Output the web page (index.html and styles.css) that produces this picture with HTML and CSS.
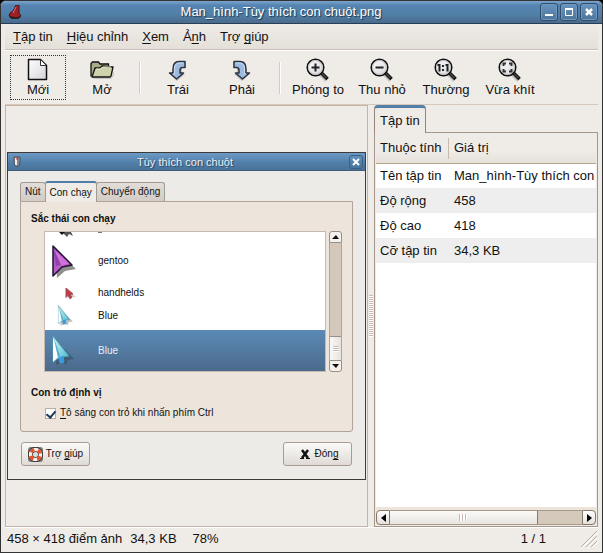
FILE: index.html
```html
<!DOCTYPE html>
<html lang="vi">
<head>
<meta charset="utf-8">
<title>Man_hình-Tùy thích con chuột.png</title>
<link rel="stylesheet" href="styles.css">
</head>
<body>
<svg class="defs" width="0" height="0" aria-hidden="true">
  <defs>
    <linearGradient id="paper" x1="0" y1="0" x2="1" y2="1"><stop offset="0" stop-color="#fff"/><stop offset="1" stop-color="#d4d2d6"/></linearGradient>
    <linearGradient id="ice" x1="0" y1="0" x2="1" y2="1"><stop offset="0" stop-color="#d9f6f8"/><stop offset="1" stop-color="#3ab4cf"/></linearGradient>
    <linearGradient id="violet" x1="0" y1="0" x2="1" y2="1"><stop offset="0" stop-color="#8d4bb5"/><stop offset=".6" stop-color="#c561cf"/><stop offset="1" stop-color="#62307c"/></linearGradient>
    <symbol id="lens" viewBox="0 0 24 24">
      <path d="M15 16l6 6" stroke="#777" stroke-opacity=".4" stroke-width="5"/>
      <path d="M15 14.500l6.500 6.500" stroke="#111" stroke-width="3.500"/>
      <path d="M15.500 15l5 5" stroke="#777" stroke-width="1"/>
      <circle cx="9.500" cy="9.500" r="8.300" fill="url(#paper)" stroke="#111" stroke-width="1.500"/>
      <circle cx="9.500" cy="9.500" r="7" fill="none" stroke="#bbb"/>
    </symbol>
    <symbol id="blue-cursor" viewBox="0 0 28 32">
      <path d="M7 6l17 18-6 1-2 5-3-3-7 3z" fill="#222" opacity=".28"/>
      <path d="M3 1l16 20-6 1 1 5-4 1-1-5-6 4z" fill="url(#ice)" stroke="#4b9cac" stroke-width="1"/>
      <path d="M3 2v25l5-5z" fill="#fff"/>
      <path d="M4 3l4 19 2-1z" fill="#4faac2"/>
      <path d="M9 22l4-1 1 6-4 1z" fill="#359be5"/>
    </symbol>
  </defs>
</svg>
<div class="window">
  <header class="titlebar">
    <svg class="app-icon" width="14" height="14" viewBox="0 0 14 14" aria-hidden="true"><path d="M1 12q5-2 12 0l-3 2H4z" fill="#222"/><path d="M8 0h3v8l2 3-5 2-7-2 1-3 3-2z" fill="#9e2025" stroke="#3f1720"/><path d="M8 2L5 8" stroke="#e57472"/></svg>
    <h1>Man_hình-Tùy thích con chuột.png</h1>
    <div class="win-buttons">
      <button type="button" aria-label="Thu nhỏ cửa sổ"><svg width="10" height="10"><path d="M1 8h8" stroke="#fff" stroke-width="2"/></svg></button>
      <button type="button" aria-label="Phóng to cửa sổ"><svg width="10" height="10"><path d="M1.500 1v7.500h7V1" stroke="#fff" fill="none"/><path d="M1 2h8" stroke="#fff" stroke-width="2"/></svg></button>
      <button type="button" aria-label="Đóng cửa sổ"><svg width="10" height="10"><path d="M2 2l6 6M8 2L2 8" stroke="#fff" stroke-width="2.500"/></svg></button>
    </div>
  </header>
  <div class="frame">
    <nav class="menubar">
      <button type="button"><u>T</u>ập tin</button>
      <button type="button"><u>H</u>iệu chỉnh</button>
      <button type="button"><u>X</u>em</button>
      <button type="button">Ả<u>n</u>h</button>
      <button type="button">Trợ <u>g</u>iúp</button>
    </nav>
    <div class="toolbar">
      <button type="button" class="focused">
        <svg width="24" height="24" viewBox="0 0 24 24"><path d="M2.500 1.500h12l6 6v14h-18z" fill="url(#paper)" stroke="#111" stroke-width="1.500" stroke-linejoin="round"/><path d="M14.500 2v5.500H20" fill="#fff" stroke="#333"/></svg>
        <span>Mới</span></button>
      <button type="button">
        <svg width="24" height="24" viewBox="0 0 24 24"><path d="M3 20h18l3-7v4l-3 4H4z" fill="#999" opacity=".5"/><path d="M1 18.500V5.500L2.500 4h6L10 6h8.500v4" fill="#a8ad88" stroke="#111" stroke-width="1.300"/><path d="M2 19L5 10h5l2-2 11 1-2 9-1 1z" fill="#cdd2ac" stroke="#111" stroke-width="1.300" stroke-linejoin="round"/><path d="M6 11h4.500l2-2H21" stroke="#eef1d5" fill="none"/></svg>
        <span>Mở</span></button>
      <span class="sep"></span>
      <button type="button">
        <svg width="24" height="24" viewBox="0 0 24 24"><g id="turn"><path d="M20 4v6h-4v6h3l-8 7-7-7" fill="#777" opacity=".4"/><path d="M19 3.500v6h-2.500q-2.500 0-2.500 3v2.500h3.500L10.500 21l-7-6H7v-4q0-7.500 6-7.500z" fill="#9dbbe0" stroke="#2c3440" stroke-width="1.500" stroke-linejoin="round"/><path d="M17.500 5h-4Q8.500 5 8.500 11v5H7" fill="none" stroke="#c9dbf0"/></g></svg>
        <span>Trái</span></button>
      <button type="button">
        <svg width="24" height="24" viewBox="0 0 24 24"><use href="#turn" transform="translate(23 0) scale(-1 1)"/></svg>
        <span>Phải</span></button>
      <span class="sep"></span>
      <button type="button">
        <svg width="24" height="24"><use href="#lens"/><path d="M5.500 9.500h8M9.500 5.500v8" stroke="#222" stroke-width="2"/></svg>
        <span>Phóng to</span></button>
      <button type="button">
        <svg width="24" height="24"><use href="#lens"/><path d="M5.500 9.500h8" stroke="#222" stroke-width="2"/></svg>
        <span>Thu nhỏ</span></button>
      <button type="button">
        <svg width="24" height="24"><use href="#lens"/><path d="M3.500 7h2v6.500M11.500 7h2v6.500" fill="none" stroke="#222" stroke-width="2"/><path d="M9 7v2M9 11v2" stroke="#222" stroke-width="2"/></svg>
        <span>Thường</span></button>
      <button type="button">
        <svg width="24" height="24"><use href="#lens"/><path d="M5.500 8V5.500H8M11 5.500h2.500V8M13.500 11v2.500H11M8 13.500H5.500V11" fill="none" stroke="#333" stroke-width="2"/></svg>
        <span>Vừa khít</span></button>
    </div>
    <main class="split">
      <section class="viewer">
        <div class="dialog">
          <div class="dialog-title">
            <svg width="8" height="12" viewBox="0 0 8 12" aria-hidden="true"><path d="M1 1h6v5q0 4-3 5-3-1-3-5z" fill="#8a8588" stroke="#4b5662"/><path d="M3 2v7" stroke="#eee" stroke-width="2"/><path d="M4 1v3" stroke="#a34"/></svg>
            <h2>Tùy thích con chuột</h2>
            <button type="button" aria-label="Đóng hộp thoại"><svg width="8" height="8"><path d="M1 1l6 6M7 1L1 7" stroke="#fff" stroke-width="2"/></svg></button>
          </div>
          <div class="dialog-body">
            <div class="tabs">
              <button type="button">Nút</button>
              <button type="button" class="active">Con chạy</button>
              <button type="button">Chuyển động</button>
            </div>
            <div class="tab-page">
              <h3>Sắc thái con chạy</h3>
              <div class="theme-box">
                <ul class="themes">
                  <li class="cut"><svg width="28" height="7"><path d="M9 0h12l2 4-4-2-2 3-4-4z" fill="#555"/><path d="M9 0h6l-3 3z" fill="#111"/></svg><i></i></li>
                  <li class="big"><svg width="28" height="34" viewBox="0 0 28 34"><path d="M5 5l21 20-11 2-8 7z" fill="#222" opacity=".5"/><path d="M3 2l19 19-10 2-9 9z" fill="url(#violet)" stroke="#241331" stroke-width="1.500" stroke-linejoin="round"/><path d="M4 5l7 16 8-1z" fill="#cf72dc"/><path d="M4 6l2 16 5-1z" fill="#9142aa"/></svg>gentoo</li>
                  <li class="small"><svg width="28" height="14" viewBox="0 0 28 14"><path d="M18 4l8 7-4 0-3 3z" fill="#999" opacity=".5"/><path d="M16 2l7 6-3 .500 2 3-2 1-2-3-2 2z" fill="#cf3644" stroke="#97515a"/></svg>handhelds</li>
                  <li class="mid"><svg width="28" height="22"><use href="#blue-cursor" x="2"/></svg>Blue</li>
                  <li class="selected"><svg width="28" height="32"><use href="#blue-cursor"/></svg>Blue</li>
                </ul>
                <div class="vscroll">
                  <button type="button" aria-label="Cuộn lên"><svg width="7" height="4"><path d="M0 4h7L4 0z" fill="#111"/></svg></button>
                  <div class="trough"><div class="grip"></div></div>
                  <button type="button" aria-label="Cuộn xuống"><svg width="7" height="4"><path d="M0 0h7L4 4z" fill="#111"/></svg></button>
                </div>
              </div>
              <h3>Con trỏ định vị</h3>
              <label class="check"><input type="checkbox" checked><span><u>T</u>ô sáng con trỏ khi nhấn phím Ctrl</span></label>
            </div>
            <div class="actions">
              <button type="button" class="help"><svg width="15" height="15" viewBox="0 0 15 15"><rect width="15" height="15" rx="3" fill="#777"/><circle cx="7.500" cy="7.500" r="5" fill="none" stroke="#222" stroke-width="5"/><circle cx="7.500" cy="7.500" r="5" fill="none" stroke="#f4f1ed" stroke-width="3.500"/><circle cx="7.500" cy="7.500" r="5" fill="none" stroke="#e95028" stroke-width="3.500" stroke-dasharray="4 3.850" stroke-dashoffset="-2"/><circle cx="7.500" cy="7.500" r="2.500" fill="#ddd"/></svg><span>Trợ <u>g</u>iúp</span></button>
              <button type="button" class="close"><svg width="10" height="10"><path d="M2 1l6 8M8 1L2 9" stroke="#111" stroke-width="2.500"/><path d="M0 9.500h4M6 9.500h4" stroke="#111"/></svg><span>Đón<u>g</u></span></button>
            </div>
          </div>
        </div>
      </section>
      <div class="handle"></div>
      <aside class="props">
        <button type="button" class="props-tab">Tập tin</button>
        <div class="props-page">
          <div class="table-area">
            <table>
              <thead><tr><th>Thuộc tính</th><th>Giá trị</th></tr></thead>
              <tbody>
                <tr><td>Tên tập tin</td><td>Man_hình-Tùy thích con chuột.png</td></tr>
                <tr><td>Độ rộng</td><td>458</td></tr>
                <tr><td>Độ cao</td><td>418</td></tr>
                <tr><td>Cỡ tập tin</td><td>34,3 KB</td></tr>
              </tbody>
            </table>
          </div>
          <div class="hscroll">
            <button type="button" aria-label="Cuộn trái"><svg width="5" height="8"><path d="M5 0v8L0 4z"/></svg></button>
            <div class="trough"><div class="grip"></div></div>
            <button type="button" aria-label="Cuộn phải"><svg width="5" height="8"><path d="M0 0v8l5-4z"/></svg></button>
          </div>
        </div>
      </aside>
    </main>
    <footer class="status">
      <span>458 × 418 điểm ảnh</span><span>34,3 KB</span><span class="zoom">78%</span>
      <span class="page">1 / 1</span>
      <svg width="18" height="18" aria-hidden="true"><path d="M1 17L17 1M6 17L17 6M11 17l6-6" stroke="#b9aca6"/><path d="M2 18L18 2M7 18L18 7M12 18l6-6" stroke="#fff"/></svg>
    </footer>
  </div>
</div>
</body>
</html>
```
FILE: styles.css
```css
* { box-sizing: border-box; }
body {
  margin: 0;
  background: #000;
  color: #111;
  font: 13px/16px "Liberation Sans", Arial, sans-serif;
}
h1, h2, h3, ul { margin: 0; padding: 0; font-size: inherit; list-style: none; }
button { margin: 0; padding: 0; border: 0; background: none; color: inherit; font: inherit; }
svg { display: block; flex: none; }
u { text-underline-offset: 2px; text-decoration-skip-ink: none; }
.defs { position: absolute; }

.window {
  display: flex;
  flex-direction: column;
  height: 100vh;
  border: 1px solid #333;
  border-radius: 6px 6px 0 0;
  background: #efebe7;
  overflow: hidden;
}
.titlebar {
  display: flex;
  align-items: center;
  height: 23px;
  padding: 0 4px 0 7px;
  border-bottom: 1px solid #263f58;
  background: linear-gradient(#7ba5cc, #5584b2 20%, #5180a8 60%, #4b6a8c);
  color: #fff;
}
.titlebar h1 {
  flex: 1;
  text-align: center;
  font-weight: normal;
  text-shadow: 1px 1px 1px #1c3047;
}
.win-buttons { display: flex; gap: 2px; }
.win-buttons button {
  display: grid;
  place-items: center;
  width: 18px;
  height: 18px;
  border: 1px solid #2f4d6b;
  border-radius: 3px;
  background: linear-gradient(#6695c1, #4d7499);
  box-shadow: inset 0 0 0 1px #7199bf;
}
.frame {
  flex: 1;
  display: flex;
  flex-direction: column;
  min-height: 0;
  padding: 0 4px 2px;
}
.menubar {
  display: flex;
  align-items: center;
  gap: 14px;
  height: 26px;
  padding: 0 8px;
  border-bottom: 1px solid #cdbeb3;
  background: linear-gradient(#efebe7, #e4dfd9);
}
.toolbar {
  display: flex;
  align-items: center;
  height: 55px;
  padding-left: 1px;
  border-top: 1px solid #fff;
  border-bottom: 1px solid #d6c9b9;
}
.toolbar button {
  display: flex;
  flex-direction: column;
  align-items: center;
  width: 56px;
  height: 45px;
  margin: 0 4px;
  padding-top: 2px;
  border: 1px solid transparent;
  white-space: nowrap;
}
.toolbar .focused { border: 1px dotted #333; }
.toolbar span { flex: none; }
.toolbar .sep {
  width: 2px;
  height: 32px;
  margin: 0 5px;
  border-left: 1px solid #d5c9c1;
  border-right: 1px solid #fff;
}

.split {
  flex: 1;
  display: grid;
  grid-template-columns: minmax(0, 1fr) 6px 224px;
  min-height: 0;
}
.viewer {
  display: flex;
  align-items: center;
  padding: 1px;
  border: 1px solid #c5b3a9;
}
.dialog {
  flex: 1;
  border: 1px solid #3d3b3b;
  background: #edebe7;
  font-size: 10px;
  line-height: 12px;
}
.dialog-title {
  display: flex;
  align-items: center;
  height: 18px;
  padding: 0 2px 0 5px;
  border-bottom: 1px solid #3d5d7c;
  background: linear-gradient(#6c9ac5, #4f7ea9 60%, #4b7297);
  color: #e9eff5;
}
.dialog-title h2 {
  flex: 1;
  text-align: center;
  font-size: 11px;
  font-weight: normal;
  text-shadow: 1px 1px 1px #2d4259;
}
.dialog-title button {
  display: grid;
  place-items: center;
  width: 14px;
  height: 14px;
  border: 1px solid #3b5f83;
  border-radius: 3px;
}
.dialog-body { padding: 10px 12px 13px; }
.tabs { display: flex; align-items: flex-end; height: 20px; }
.tabs button {
  height: 19px;
  padding: 0 4px;
  border: 1px solid #a39a92;
  border-bottom: 0;
  border-radius: 3px 3px 0 0;
  background: linear-gradient(#e2ddd8, #d3ccc6);
}
.tabs .active {
  height: 21px;
  margin: 0 -1px -1px;
  padding: 0 4px;
  border-top: 2px solid #4f7ea9;
  background: #efebe6;
}
.tab-page {
  padding: 11px 10px 12px;
  border: 1px solid #b1a399;
  border-radius: 0 0 3px 3px;
  background: #ede5db;
}
.tab-page h3 { font-weight: bold; }
.theme-box {
  display: flex;
  gap: 3px;
  height: 141px;
  margin: 6px 0 15px;
  padding-left: 13px;
}
.themes {
  flex: 1;
  border: 1px solid #c6bab0;
  background: #fff;
  overflow: hidden;
}
.themes li { display: flex; align-items: center; gap: 20px; height: 24px; padding-left: 5px; }
.themes .cut { height: 7px; align-items: flex-start; }
.themes .cut i { width: 4px; height: 1px; background: #777; }
.themes .big { height: 44px; }
.themes .small { height: 19px; }
.themes .mid { height: 28px; }
.themes .selected {
  height: 41px;
  background: linear-gradient(#5b8ab6, #4b6a8b);
  color: #e8eef4;
}
.vscroll { display: flex; flex-direction: column; width: 13px; }
.vscroll button {
  display: grid;
  place-items: center;
  height: 12px;
  border: 1px solid #9a8f83;
  border-radius: 3px 3px 0 0;
  background: #f3f0ed;
}
.vscroll button:last-child { border-radius: 0 0 3px 3px; }
.vscroll .trough {
  flex: 1;
  display: flex;
  flex-direction: column;
  justify-content: flex-end;
  border: solid #b3a595;
  border-width: 0 1px;
  background: #d3c8ba;
}
.vscroll .grip {
  display: grid;
  place-items: center;
  height: 24px;
  border-top: 1px solid #9a8f83;
  background: linear-gradient(90deg, #faf8f6, #e6e2de);
}
.vscroll .grip::before {
  content: "";
  width: 6px;
  height: 6px;
  background: repeating-linear-gradient(#c9bfb8 0 1px, #fff 1px 2px);
}
.check { display: flex; align-items: center; gap: 4px; margin-top: 8px; padding-left: 14px; }
.check input {
  appearance: none;
  display: grid;
  place-items: center;
  width: 11px;
  height: 11px;
  margin: 0;
  border: 1px solid #b9aca1;
  background: #fff;
}
.check input::before {
  content: "";
  width: 4px;
  height: 7px;
  margin-bottom: 2px;
  border: solid #223b55;
  border-width: 0 2px 2px 0;
  transform: rotate(40deg);
}
.actions { display: flex; justify-content: space-between; padding: 10px 1px 0; }
.actions button {
  display: flex;
  align-items: center;
  justify-content: center;
  gap: 3px;
  width: 69px;
  height: 24px;
  border: 1px solid #a99b91;
  border-radius: 3px;
  background: linear-gradient(#fbfaf9, #dfdad5);
}
.actions .close { gap: 5px; padding-left: 3px; }

.handle { display: grid; place-items: center; }
.handle::before {
  content: "";
  width: 4px;
  height: 42px;
  background: repeating-linear-gradient(#cdb9b1 0 1px, #fff 1px 2px);
}
.props { display: flex; flex-direction: column; align-items: flex-start; min-width: 0; }
.props-tab {
  z-index: 1;
  height: 28px;
  margin-bottom: -1px;
  padding: 0 5px;
  border: 1px solid #958478;
  border-top: 3px solid #5380ab;
  border-bottom: 0;
  border-radius: 4px 4px 0 0;
  background: #efebe7;
}
.props-page {
  flex: 1;
  display: flex;
  flex-direction: column;
  align-self: stretch;
  min-height: 0;
  padding: 1px;
  border: 1px solid #a4968a;
}
.table-area { flex: 1; background: #fff; overflow: hidden; }
table { width: 100%; border-collapse: collapse; table-layout: fixed; }
th, td { height: 25px; padding: 0 4px 0 5px; text-align: left; font-weight: normal; white-space: nowrap; }
th { height: 29px; border-bottom: 1px solid #b7a58a; background: linear-gradient(#efebe7, #efebe7 60%, #e6e1d9); }
th:first-child { width: 73px; padding: 0 0 0 4px; background: linear-gradient(#c8b9ae, #c8b9ae) right / 1px 21px no-repeat, linear-gradient(#efebe7, #efebe7 60%, #e6e1d9); }
td:first-child { padding: 0 0 0 4px; }
tbody tr:nth-child(even) { background: #eee; }
.hscroll { display: flex; height: 18px; padding-top: 3px; background: #ede5db; }
.hscroll button {
  display: grid;
  place-items: center;
  width: 14px;
  border: 1px solid #857968;
  border-radius: 4px 0 0 4px;
  background: linear-gradient(#fff, #e5e0dc);
}
.hscroll button:last-child { border-radius: 0 4px 4px 0; }
.hscroll .trough { flex: 1; border: solid #a79a86; border-width: 1px 0; background: #d5c9bb; }
.hscroll .grip {
  display: grid;
  place-items: center;
  width: 77%;
  height: 100%;
  border-right: 1px solid #857968;
  background: linear-gradient(#fbfaf8, #e8e4e0);
}
.hscroll .grip::before {
  content: "";
  width: 8px;
  height: 7px;
  background: repeating-linear-gradient(90deg, #c9b9b2 0 1px, #fff 1px 3px);
}
.status {
  display: flex;
  align-items: center;
  gap: 8px;
  height: 23px;
  padding: 0 0 1px 2px;
  border-top: 1px solid #fff;
}
.status .zoom { margin-left: 8px; }
.status .page { margin-left: auto; margin-right: 26px; }
```
